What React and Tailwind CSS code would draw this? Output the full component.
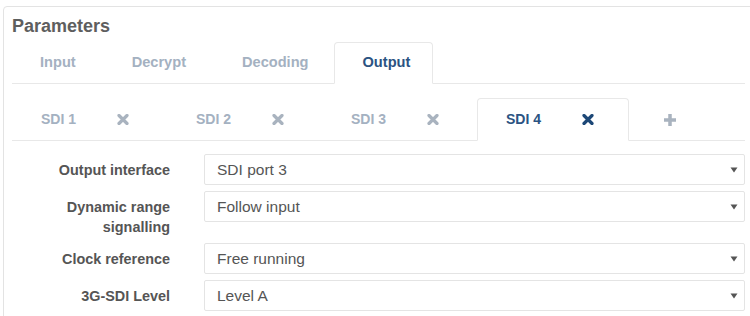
import React from "react";

const XIcon = ({ color }) => (
  <svg width="12" height="11" viewBox="0 0 12 11" className="block">
    <path d="M2 1.5 L10 9.5 M10 1.5 L2 9.5" stroke={color} strokeWidth="3.2" strokeLinecap="round" />
  </svg>
);

const PlusIcon = () => (
  <svg width="14" height="14" viewBox="0 0 14 14" className="block">
    <path d="M7 1 V13 M1 7 H13" stroke="#a9b3bf" strokeWidth="3.5" strokeLinecap="butt" />
  </svg>
);

const Caret = () => (
  <svg width="8" height="6" viewBox="0 0 8 6" className="block">
    <path d="M0.5 0.5 H7.5 L4 5.5 Z" fill="#555" />
  </svg>
);

function Select({ value }) {
  return (
    <div className="flex-1 h-[31px] border border-[#e4e4e4] rounded-[2px] flex items-center justify-between pl-[12px] pr-[6px] text-[15.5px] text-[#555]">
      <span>{value}</span>
      <Caret />
    </div>
  );
}

function Row({ label, value }) {
  return (
    <div className="flex items-start mb-[6px]">
      <div className="w-[158px] pt-[6px] leading-[20px] text-right text-[14.4px] font-bold text-[#555]">
        {label}
      </div>
      <div className="w-[34px]" />
      <Select value={value} />
    </div>
  );
}

export default function App() {
  const outerTabs = [
    { t: "Input", c: "px-[27px] border-transparent text-[#a4b1c1]" },
    { t: "Decrypt", c: "px-[27px] border-transparent text-[#a4b1c1]" },
    { t: "Decoding", c: "pl-[27px] pr-[24px] border-transparent text-[#a4b1c1]" },
    { t: "Output", c: "pl-[28px] pr-[22px] border-[#e8e8e8] border-b-white bg-white text-[#2b5382]" },
  ];
  const sdiTabs = ["SDI 1", "SDI 2", "SDI 3", "SDI 4"];
  return (
    <div
      className="w-[750px] h-[316px] overflow-hidden bg-white"
      style={{ fontFamily: '"Liberation Sans", Arial, sans-serif' }}
    >
      <div className="ml-[3px] mt-[6px] w-[760px] h-[340px] border border-[#e3e3e3] rounded-[4px] pl-[8px] pt-[9px]">
        <div className="w-[733px]">
          <h2 className="text-[18px] leading-[20px] font-bold text-[#5e5e5e]">Parameters</h2>

          {/* outer tabs */}
          <div className="mt-[6px] flex border-b border-[#e8e8e8]">
            {outerTabs.map(({ t, c }) => (
              <div
                key={t}
                className={
                  "h-[42px] flex items-center text-[14.6px] font-bold border rounded-t-[4px] -mb-[1px] " + c
                }
              >
                {t}
              </div>
            ))}
          </div>

          {/* inner tabs */}
          <div className="mt-[14px] flex border-b border-[#e8e8e8]">
            {sdiTabs.map((t) => {
              const active = t === "SDI 4";
              return (
                <div
                  key={t}
                  className={
                    "w-[152px] mr-[3px] h-[43px] pl-[28px] flex items-center text-[14px] font-bold border rounded-t-[4px] -mb-[1px] " +
                    (active
                      ? "border-[#e8e8e8] border-b-white bg-white text-[#2b5382]"
                      : "border-transparent text-[#a4b1c1]")
                  }
                >
                  <span className="w-[76px]">{t}</span>
                  <XIcon color={active ? "#1d4877" : "#a9b3bf"} />
                </div>
              );
            })}
            <div className="h-[43px] pl-[30px] flex items-center border border-transparent -mb-[1px]">
              <PlusIcon />
            </div>
          </div>

          {/* form */}
          <div className="mt-[13px]">
            <Row label="Output interface" value="SDI port 3" />
            <Row label="Dynamic range signalling" value="Follow input" />
            <Row label="Clock reference" value="Free running" />
            <Row label="3G-SDI Level" value="Level A" />
          </div>
        </div>
      </div>
    </div>
  );
}
